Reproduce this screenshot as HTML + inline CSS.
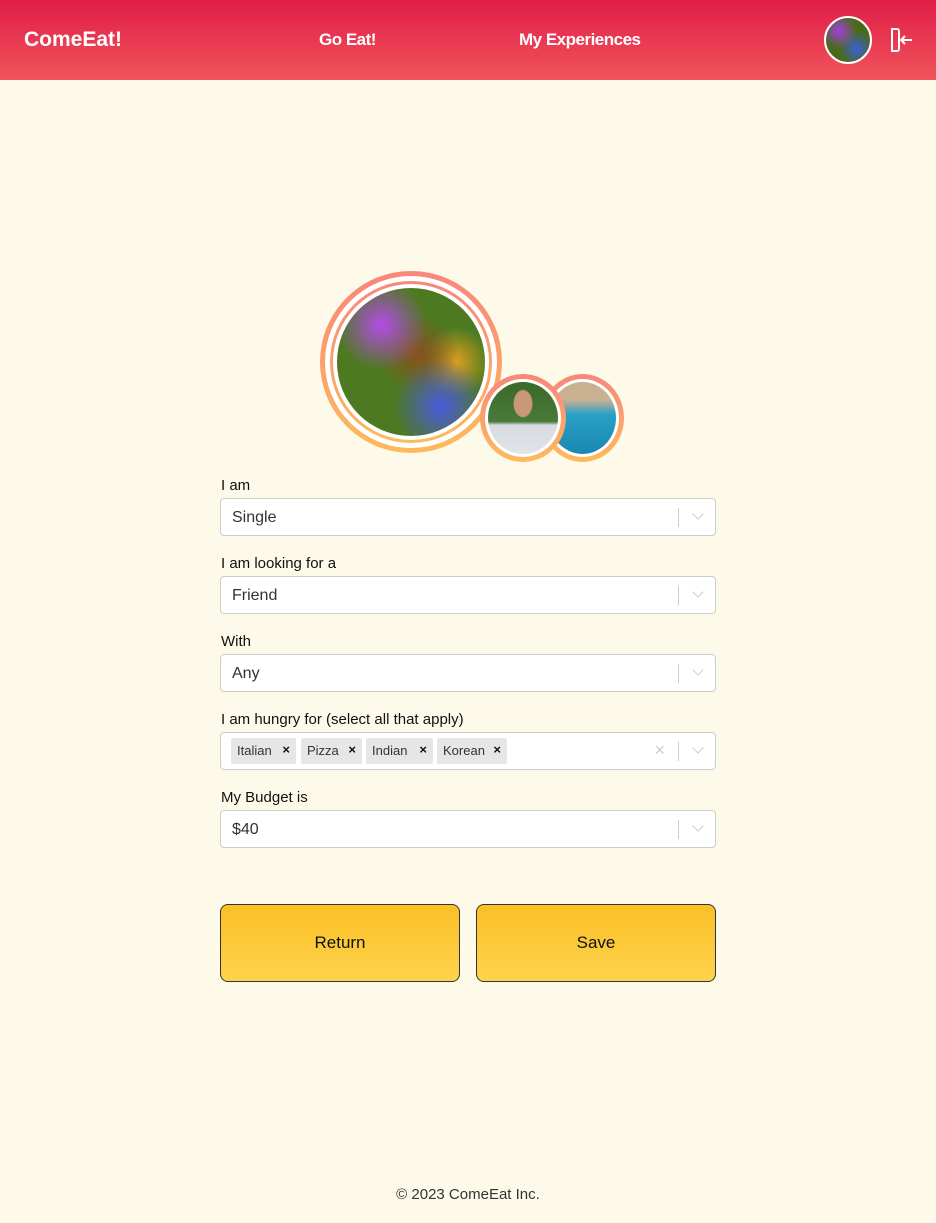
<!DOCTYPE html>
<html><head><meta charset="utf-8"><style>
*{box-sizing:border-box;margin:0;padding:0}
body{width:936px;height:1223px;background:#fefae9;font-family:"Liberation Sans",sans-serif;color:#222;position:relative;overflow:hidden}
.hdr{position:absolute;left:0;top:0;width:936px;height:80px;background:linear-gradient(#e11d48,#f0545a)}
.hdr span{position:absolute;color:#fff;font-weight:bold;top:30px;font-size:17px;letter-spacing:-0.5px}
.ring{position:absolute;border-radius:50%;background:linear-gradient(#f8877a,#fcbb5d)}
.ring>div{position:absolute;border-radius:50%;background:#fff}
.img{position:absolute;border-radius:50%}
.lbl{position:absolute;left:221px;font-size:15px;color:#111}
.sel{position:absolute;left:220px;width:496px;height:38px;background:#fff;border:1px solid #ccc;border-radius:4px;font-size:16px;color:#333}
.sel .v{position:absolute;left:11px;top:10px}
.sep{position:absolute;right:36px;top:9px;width:1px;height:19px;background:#ccc}
.chev{position:absolute;right:13px;top:11px;width:8px;height:8px;border-right:1.5px solid #ccc;border-bottom:1.5px solid #ccc;transform:rotate(45deg)}
.tag{position:absolute;top:5px;height:26px;background:#e6e6e6;border-radius:2px;font-size:13px;color:#333;padding:5px 0 0 6px}
.tag b{position:absolute;right:6px;top:4px;font-size:13px;color:#111}
.btn{position:absolute;top:904px;width:240px;height:78px;border:1px solid #333;border-radius:8px;background:linear-gradient(#fbbf24,#fdd34d);font-size:17px;text-align:center;line-height:76px;color:#111}
</style></head><body>
<div class="hdr">
<span style="left:24px;font-size:21px;top:28px;letter-spacing:0">ComeEat!</span>
<span style="left:319px">Go Eat!</span>
<span style="left:519px">My Experiences</span>
<div style="position:absolute;left:824px;top:16px;width:48px;height:48px;border-radius:50%;border:2px solid #fff;background:radial-gradient(circle at 30% 30%,#a33ee0,transparent 40%),radial-gradient(circle at 70% 70%,#3a5fd8,transparent 40%),#4a6a1a"></div>
<svg style="position:absolute;left:888px;top:27px" width="26" height="26" viewBox="0 0 26 26" fill="none" stroke="#fff" stroke-width="2"><path d="M9 2H4v22h5a2 2 0 0 0 2-2V4a2 2 0 0 0-2-2z M24 13H13 M17 9l-4 4 4 4"/></svg>
</div>
<div class="ring" style="left:320px;top:271px;width:182px;height:182px"><div style="left:5px;top:5px;width:172px;height:172px"></div></div>
<div class="ring" style="left:330px;top:281px;width:162px;height:162px"><div style="left:3px;top:3px;width:156px;height:156px"></div></div>
<div class="img" style="left:337px;top:288px;width:148px;height:148px;background:radial-gradient(circle at 30% 25%,#b54ae8,transparent 30%),radial-gradient(circle at 70% 80%,#4b5ae0,transparent 30%),radial-gradient(circle at 55% 45%,#8a5020,transparent 35%),radial-gradient(circle at 80% 50%,#e0a020,transparent 25%),#4d7a20"></div>
<div class="ring" style="left:541px;top:374px;width:83px;height:88px"><div style="left:5px;top:5px;width:73px;height:78px"></div></div>
<div class="img" style="left:549px;top:382px;width:67px;height:72px;background:linear-gradient(#c8b090 0,#c8b090 25%,#2aa0c8 45%,#1a88b0)"></div>
<div class="ring" style="left:480px;top:374px;width:86px;height:88px"><div style="left:5px;top:5px;width:76px;height:78px"></div></div>
<div class="img" style="left:488px;top:382px;width:70px;height:72px;background:radial-gradient(ellipse at 50% 30%,#c89878 0,#c89878 18%,transparent 20%),linear-gradient(#3a6a2a 0,#4a7a3a 55%,#d8dce0 60%,#e0e4e8)"></div>
<div class="lbl" style="top:477px">I am</div>
<div class="sel" style="top:498px"><span class="v">Single</span><div class="sep"></div><div class="chev"></div></div>
<div class="lbl" style="top:555px">I am looking for a</div>
<div class="sel" style="top:576px"><span class="v">Friend</span><div class="sep"></div><div class="chev"></div></div>
<div class="lbl" style="top:633px">With</div>
<div class="sel" style="top:654px"><span class="v">Any</span><div class="sep"></div><div class="chev"></div></div>
<div class="lbl" style="top:711px">I am hungry for (select all that apply)</div>
<div class="sel" style="top:732px">
<div class="tag" style="left:10px;width:65px">Italian<b>×</b></div>
<div class="tag" style="left:80px;width:61px">Pizza<b>×</b></div>
<div class="tag" style="left:145px;width:67px">Indian<b>×</b></div>
<div class="tag" style="left:216px;width:70px">Korean<b>×</b></div>
<span style="position:absolute;right:50px;top:7px;color:#ccc;font-size:18px">×</span>
<div class="sep"></div><div class="chev"></div></div>
<div class="lbl" style="top:789px">My Budget is</div>
<div class="sel" style="top:810px"><span class="v">$40</span><div class="sep"></div><div class="chev"></div></div>
<div class="btn" style="left:220px">Return</div>
<div class="btn" style="left:476px">Save</div>
<div style="position:absolute;top:1186px;width:936px;text-align:center;font-size:15px;color:#333">© 2023 ComeEat Inc.</div>
</body></html>
